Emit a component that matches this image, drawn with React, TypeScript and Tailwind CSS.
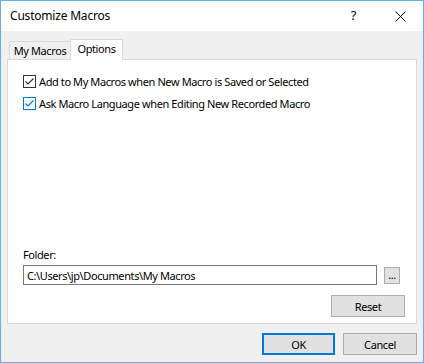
import { useState } from "react";

function Check({ checked, focused, label, onToggle }: { checked: boolean; focused?: boolean; label: string; onToggle: () => void }) {
  const color = focused ? "#0078d7" : "#333333";
  return (
    <label className="flex items-center h-[13px] cursor-default" onClick={onToggle}>
      <span
        className="w-[13px] h-[13px] border bg-white flex items-center justify-center shrink-0"
        style={{ borderColor: color }}
      >
        {checked && (
          <svg width="11" height="11" viewBox="0 0 11 11">
            <path d="M1.5 5.5 L4 8 L9.5 2.5" fill="none" stroke={color} strokeWidth="1.2" />
          </svg>
        )}
      </span>
      <span className="ml-[3px] leading-none">{label}</span>
    </label>
  );
}

export default function App() {
  const [addMy, setAddMy] = useState(true);
  const [askLang, setAskLang] = useState(true);
  const [tab, setTab] = useState("options");

  return (
    <div
      className="w-[424px] h-[363px] border border-[#61b1e9] bg-[#f0f0f0] flex flex-col text-[11px] tracking-[-0.4px] text-black"
      style={{ fontFamily: '"Noto Sans", "Open Sans", sans-serif' }}
    >
      {/* title bar */}
      <div className="h-[30px] bg-white flex items-center shrink-0">
        <span className="ml-[9px] text-[12px] tracking-[-0.2px]">Customize Macros</span>
        <span className="ml-auto mr-[39px] text-[13px]">?</span>
        <svg className="mr-[17px]" width="11" height="11" viewBox="0 0 11 11">
          <path d="M0.5 0.5 L10.5 10.5 M10.5 0.5 L0.5 10.5" stroke="#000" strokeWidth="1" />
        </svg>
      </div>

      <div className="flex-1 flex flex-col px-[6px] pt-[7px] pb-[7px]">
        {/* tabs */}
        <div className="flex items-end h-[21px] pl-[2px] relative z-10">
          <button
            onClick={() => setTab("my")}
            className="h-[18px] w-[61px] border border-b-0 border-r-0 border-[#d9d9d9] bg-[#f0f0f0] leading-none flex items-center justify-center"
          >
            My Macros
          </button>
          <button
            onClick={() => setTab("options")}
            className="h-[21px] w-[53px] -mb-px border border-b-0 border-[#d9d9d9] bg-white leading-none flex items-center justify-center pb-[3px]"
          >
            Options
          </button>
        </div>

        {/* panel */}
        <div className="h-[265px] bg-white border border-[#d9d9d9] flex flex-col pl-[15px] pr-[11px] pt-[15px] pb-[6px]">
          {tab === "options" && (
            <>
              <div className="flex flex-col gap-[9px]">
                <Check checked={addMy} label="Add to My Macros when New Macro is Saved or Selected" onToggle={() => setAddMy(!addMy)} />
                <Check checked={askLang} focused label="Ask Macro Language when Editing New Recorded Macro" onToggle={() => setAskLang(!askLang)} />
              </div>
              <div className="flex-1" />
              <div className="leading-none mb-[5px]">Folder:</div>
              <div className="flex items-center">
                <div className="w-[354px] h-[20px] border border-[#7a7a7a] flex items-center px-[3px] leading-none">
                  C:\Users\jp\Documents\My Macros
                </div>
                <button className="ml-[7px] w-[16px] h-[17px] border border-[#adadad] bg-[#e1e1e1] text-[11px] leading-none flex items-end justify-center pb-[3px]">
                  ...
                </button>
              </div>
              <div className="flex justify-end mt-[10px]">
                <button className="w-[74px] h-[22px] border border-[#adadad] bg-[#e1e1e1] leading-none">Reset</button>
              </div>
            </>
          )}
        </div>

        <div className="flex-1" />
        <div className="flex justify-end gap-[8px]">
          <button className="w-[73px] h-[22px] border-2 border-[#0078d7] bg-[#e1e1e1] leading-none">OK</button>
          <button className="w-[74px] h-[22px] border border-[#adadad] bg-[#e1e1e1] leading-none">Cancel</button>
        </div>
      </div>
    </div>
  );
}
